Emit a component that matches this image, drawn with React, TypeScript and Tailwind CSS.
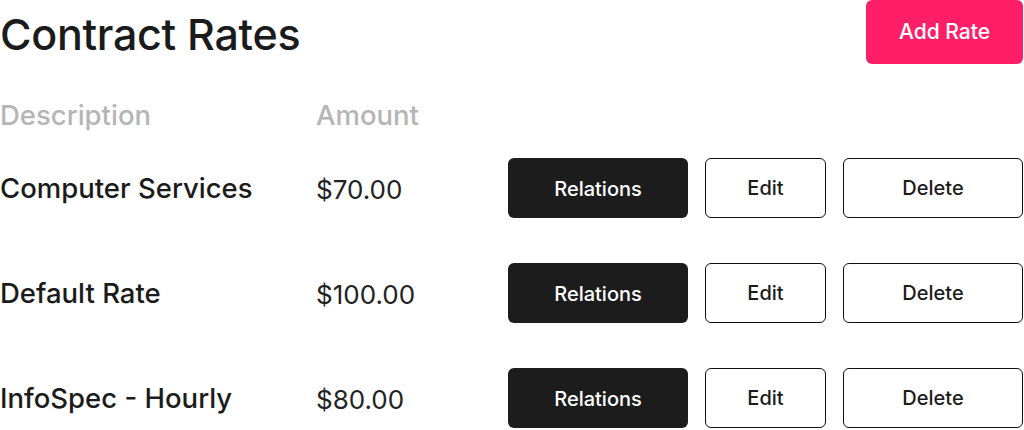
import React from 'react';

interface Rate {
  id: number;
  description: string;
  amount: string;
}

const rates: Rate[] = [
  { id: 1, description: 'Computer Services', amount: '$70.00' },
  { id: 2, description: 'Default Rate', amount: '$100.00' },
  { id: 3, description: 'InfoSpec - Hourly', amount: '$80.00' },
];

export default function App() {
  return (
    <div
      className="w-[1023px] bg-white text-[#1b1b1b]"
      style={{ fontFamily: 'Inter, "Noto Sans", sans-serif' }}
    >
      <div className="flex h-16 items-center justify-between">
        <h1 className="pt-1 text-[43px] font-medium leading-none tracking-[-0.3px]">Contract Rates</h1>
        <button className="h-16 w-[157px] rounded-md bg-[#ff1f69] text-[21px] font-medium text-white">
          Add Rate
        </button>
      </div>

      <div className="mt-9 flex h-8 items-center text-[27.5px] font-medium text-[#b5b5b5]">
        <div className="w-[316px]">Description</div>
        <div>Amount</div>
      </div>

      <div className="mt-[26px] flex flex-col gap-[45px]">
        {rates.map((rate) => (
          <div key={rate.id} className="flex h-[60px] items-center">
            <div className="w-[316px] pt-0.5 text-[27.5px] font-medium">{rate.description}</div>
            <div className="w-[192px] pt-0.5 text-[26px] text-[#222]">{rate.amount}</div>
            <div className="flex h-full gap-[17px]">
              <button className="h-full w-[180px] rounded-md bg-[#1c1c1c] pt-0.5 text-[20px] font-medium text-white">
                Relations
              </button>
              <button className="h-full w-[121px] rounded-md border-[1.5px] border-[#111] text-[20px] font-medium">
                Edit
              </button>
              <button className="h-full w-[180px] rounded-md border-[1.5px] border-[#111] text-[20px] font-medium">
                Delete
              </button>
            </div>
          </div>
        ))}
      </div>
    </div>
  );
}
